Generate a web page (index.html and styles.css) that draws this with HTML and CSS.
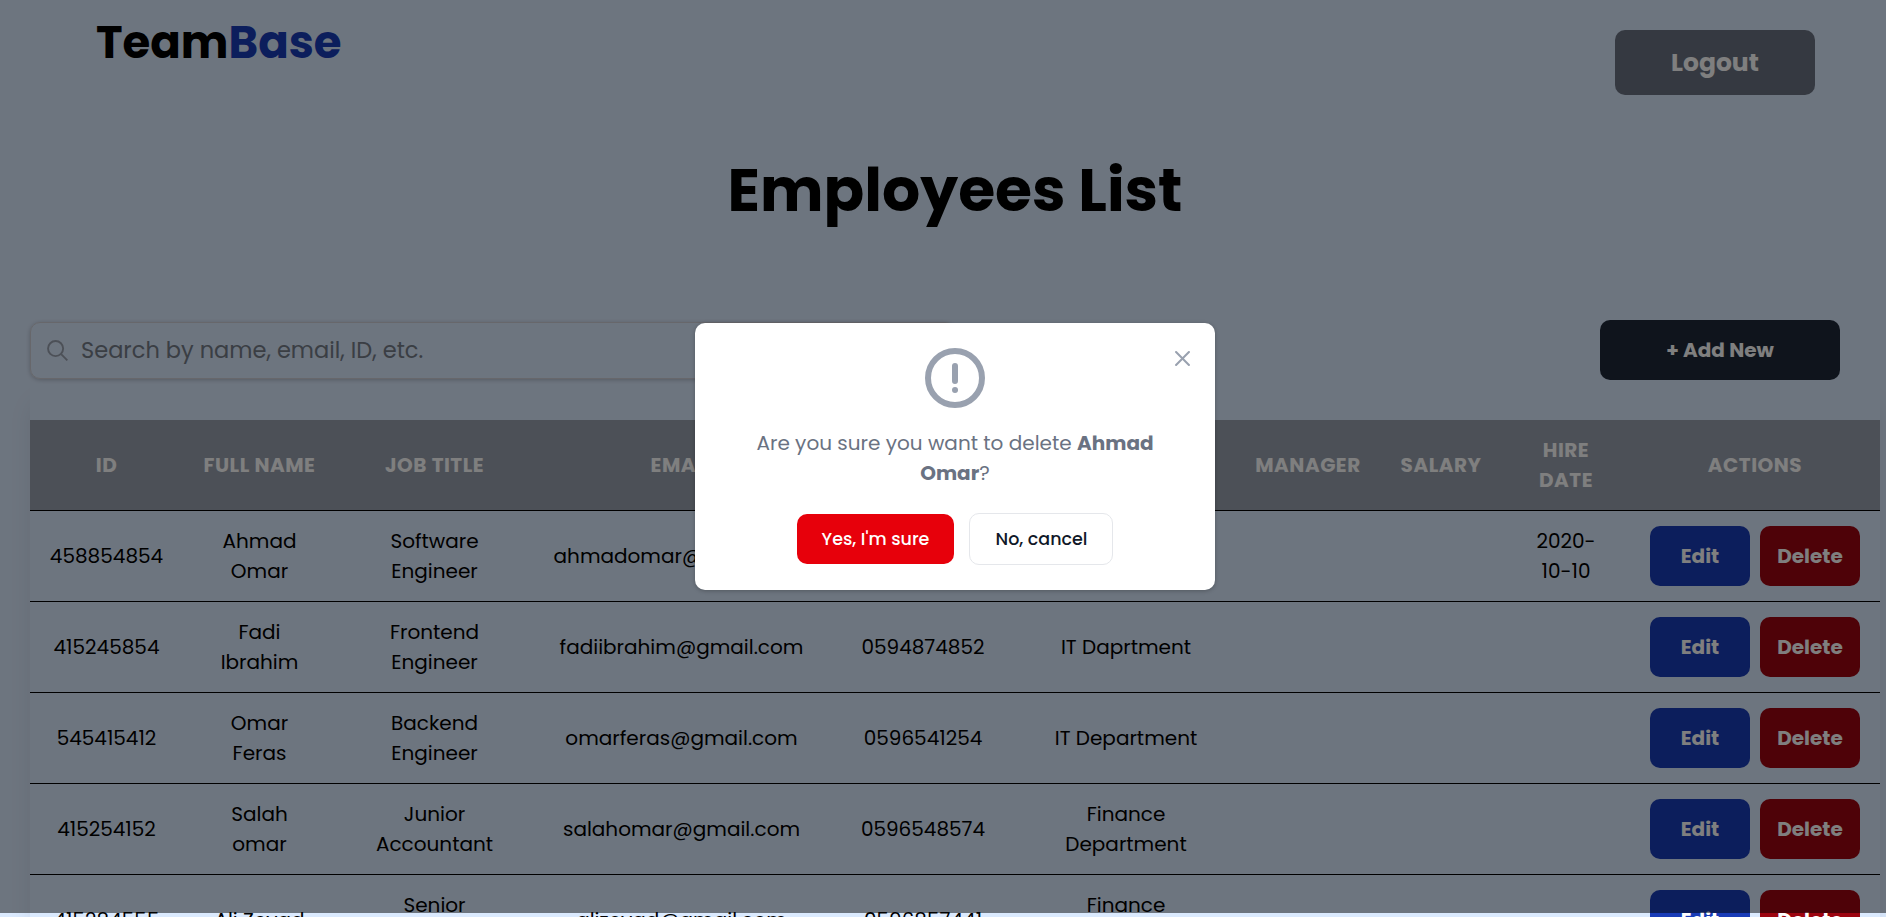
FILE: index.html
```html
<!DOCTYPE html>
<html lang="en">
<head>
<meta charset="utf-8">
<title>TeamBase</title>
<link rel="stylesheet" href="styles.css">
</head>
<body>
<div class="page">
  <header class="topbar">
    <div class="logo">Team<span class="logo-base">Base</span></div>
    <button class="btn logout">Logout</button>
  </header>
  <h1 class="title">Employees List</h1>
  <div class="toolbar">
    <div class="search">
      <svg class="search-icon" viewBox="0 0 22 22" fill="none" stroke="currentColor" stroke-width="2"><circle cx="9" cy="9" r="7.9"/><path d="M14.8 14.8 21.3 21.3"/></svg>
      <span>Search by name, email, ID, etc.</span>
    </div>
    <button class="btn add">+ Add New</button>
  </div>
  <div class="table-wrap">
    <table class="table">
      <colgroup><col class="c-id"><col class="c-name"><col class="c-job"><col class="c-email"><col class="c-phone"><col class="c-dept"><col class="c-manager"><col class="c-salary"><col class="c-hire"><col class="c-actions"></colgroup>
      <thead>
        <tr><th>ID</th><th>FULL NAME</th><th>JOB TITLE</th><th>EMAIL</th><th></th><th></th><th>MANAGER</th><th>SALARY</th><th>HIRE<br>DATE</th><th>ACTIONS</th></tr>
      </thead>
      <tbody>
        <tr><td>458854854</td><td>Ahmad<br>Omar</td><td>Software<br>Engineer</td><td>ahmadomar@gmail.com</td><td></td><td></td><td></td><td></td><td>2020-<br>10-10</td><td><div class="actions"><button class="btn edit">Edit</button><button class="btn delete">Delete</button></div></td></tr>
        <tr><td>415245854</td><td>Fadi<br>Ibrahim</td><td>Frontend<br>Engineer</td><td>fadiibrahim@gmail.com</td><td>0594874852</td><td>IT Daprtment</td><td></td><td></td><td></td><td><div class="actions"><button class="btn edit">Edit</button><button class="btn delete">Delete</button></div></td></tr>
        <tr><td>545415412</td><td>Omar<br>Feras</td><td>Backend<br>Engineer</td><td>omarferas@gmail.com</td><td>0596541254</td><td>IT Department</td><td></td><td></td><td></td><td><div class="actions"><button class="btn edit">Edit</button><button class="btn delete">Delete</button></div></td></tr>
        <tr><td>415254152</td><td>Salah<br>omar</td><td>Junior<br>Accountant</td><td>salahomar@gmail.com</td><td>0596548574</td><td>Finance<br>Department</td><td></td><td></td><td></td><td><div class="actions"><button class="btn edit">Edit</button><button class="btn delete">Delete</button></div></td></tr>
        <tr><td>415284555</td><td>Ali Zeyad</td><td>Senior<br>Accountant</td><td>alizeyad@gmail.com</td><td>0596857441</td><td>Finance<br>Department</td><td></td><td></td><td></td><td><div class="actions"><button class="btn edit">Edit</button><button class="btn delete">Delete</button></div></td></tr>
      </tbody>
    </table>
  </div>
  <div class="overlay">
    <div class="modal">
      <button class="close" aria-label="Close"><svg viewBox="0 0 14 14" width="15" height="15" fill="none" stroke="currentColor" stroke-width="1.9" stroke-linecap="round" stroke-linejoin="round"><path d="m1 1 6 6m0 0 6 6M7 7l6-6M7 7l-6 6"/></svg></button>
      <svg class="warn" viewBox="0 0 20 20" fill="none" stroke="currentColor" stroke-width="2" stroke-linecap="round" stroke-linejoin="round"><path d="M10 11V6m0 8h.01M19 10a9 9 0 1 1-18 0 9 9 0 0 1 18 0Z"/></svg>
      <p class="question">Are you sure you want to delete <strong>Ahmad<br>Omar</strong>?</p>
      <div class="choices"><button class="btn yes">Yes, I'm sure</button><button class="btn no">No, cancel</button></div>
    </div>
  </div>
</div>
</body>
</html>
```
FILE: styles.css
```css
* { box-sizing: border-box; }
html, body { margin: 0; height: 100%; overflow: hidden; }
body {
  background: #dbeafe;
  color: #000;
  font-family: Poppins, Inter, "Noto Sans", sans-serif;
  font-size: 20px;
  line-height: 30px;
}
.page { position: relative; width: 1910px; height: 917px; overflow: hidden; }

.btn {
  display: flex;
  align-items: center;
  justify-content: center;
  padding: 0;
  border: 0;
  border-radius: 10px;
  color: #fff;
  font: inherit;
  font-weight: 700;
  white-space: nowrap;
}

.topbar {
  display: flex;
  justify-content: space-between;
  align-items: flex-start;
  height: 160px;
  padding: 13px 95px 0 96px;
}
.logo { font-size: 45px; line-height: 60px; font-weight: 700; }
.logo-base { color: #193cb8; }
.logout {
  width: 200px;
  height: 65px;
  margin-top: 17px;
  background: #6a7282;
  font-size: 25px;
}
.title {
  margin: 0;
  text-align: center;
  font-size: 60px;
  line-height: 60px;
  font-weight: 700;
}
.toolbar {
  display: flex;
  justify-content: space-between;
  align-items: center;
  height: 60px;
  margin: 100px 70px 0 30px;
}
.search {
  display: flex;
  align-items: center;
  gap: 13px;
  width: 925px;
  height: 57px;
  margin-top: 1px;
  padding-left: 16px;
  border: 1px solid #cfcfd6;
  border-radius: 10px;
  box-shadow: 0 1px 4px rgba(0, 0, 0, .22);
  color: #757d89;
  font-size: 22.5px;
}
.search span { padding-bottom: 2px; }
.search-icon { width: 21px; height: 21px; color: #99a1af; }
.add { width: 240px; height: 60px; background: #1e2939; }

.table-wrap {
  width: 1850px;
  margin-left: 30px;
  padding-top: 40px;
  background: #dbeafe;
  box-shadow: 0 20px 25px -5px rgba(0, 0, 0, .1);
}
.table { width: 1850px; table-layout: fixed; border-collapse: separate; border-spacing: 0; }
.c-id, .c-name { width: 153px; }
.c-job, .c-email { width: 297px; }
.c-job { width: 197px; }
.c-phone { width: 186px; }
.c-dept { width: 220px; }
.c-manager { width: 144px; }
.c-salary { width: 122px; }
.c-hire { width: 128px; }
.c-actions { width: 250px; }
th, td {
  height: 91px;
  padding: 0;
  border-bottom: 1px solid #000;
  text-align: center;
  vertical-align: middle;
}
th { background: #99a1af; color: #fff; font-weight: 700; letter-spacing: .5px; }
.actions { display: flex; justify-content: center; gap: 10px; }
.edit, .delete { width: 100px; height: 60px; }
.edit { background: #193cb8; }
.delete { background: #9d0410; }

.overlay {
  position: absolute;
  top: 0;
  left: 0;
  display: flex;
  align-items: center;
  justify-content: center;
  width: 1910px;
  height: 913px;
  background: rgba(0, 0, 0, .5);
}
.modal {
  position: relative;
  display: flex;
  flex-direction: column;
  align-items: center;
  width: 520px;
  height: 267px;
  padding-top: 25px;
  background: #fff;
  border-radius: 10px;
  box-shadow: 0 1px 4px rgba(0, 0, 0, .25);
}
.close {
  position: absolute;
  top: 28px;
  right: 25px;
  display: flex;
  padding: 0;
  border: 0;
  background: none;
  color: #99a1af;
}
.warn { width: 60px; height: 60px; color: #99a1af; }
.question {
  margin: 20px 0 25px;
  color: #6a7282;
  text-align: center;
}
.choices { display: flex; align-items: center; gap: 15px; }
.yes, .no { font-size: 17.5px; font-weight: 500; }
.yes { width: 157px; height: 50px; background: #e7000b; }
.no {
  width: 144px;
  height: 52px;
  padding-left: 1px;
  border: 1px solid #e5e7eb;
  background: #fff;
  color: #101828;
}
```
